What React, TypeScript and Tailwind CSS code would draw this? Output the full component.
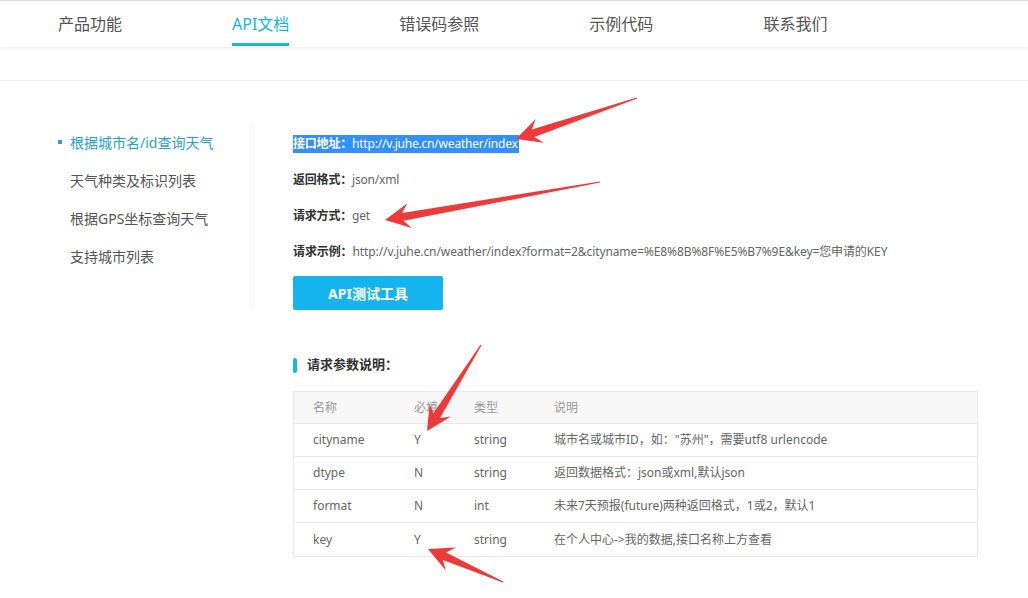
import React from "react";

const navItems = ["产品功能", "API文档", "错误码参照", "示例代码", "联系我们"];

const sideItems = ["根据城市名/id查询天气", "天气种类及标识列表", "根据GPS坐标查询天气", "支持城市列表"];

const params = [
  { name: "cityname", req: "Y", type: "string", desc: "城市名或城市ID，如：\"苏州\"，需要utf8 urlencode" },
  { name: "dtype", req: "N", type: "string", desc: "返回数据格式：json或xml,默认json" },
  { name: "format", req: "N", type: "int", desc: "未来7天预报(future)两种返回格式，1或2，默认1" },
  { name: "key", req: "Y", type: "string", desc: "在个人中心->我的数据,接口名称上方查看" },
];

type Pt = [number, number];

// annotation arrow: tapered tail, barbed head
function arrowPoints(tail: Pt, tip: Pt, headLen = 25, headW = 25, neckW = 8) {
  const dx = tip[0] - tail[0];
  const dy = tip[1] - tail[1];
  const len = Math.hypot(dx, dy);
  const ux = dx / len;
  const uy = dy / len;
  const nx = -uy;
  const ny = ux;
  const wb: Pt = [tip[0] - ux * headLen, tip[1] - uy * headLen];
  const nb: Pt = [tip[0] - ux * headLen * 0.72, tip[1] - uy * headLen * 0.72];
  const pts: Pt[] = [
    [tail[0] + nx * 0.6, tail[1] + ny * 0.6],
    [nb[0] + (nx * neckW) / 2, nb[1] + (ny * neckW) / 2],
    [wb[0] + (nx * headW) / 2, wb[1] + (ny * headW) / 2],
    tip,
    [wb[0] - (nx * headW) / 2, wb[1] - (ny * headW) / 2],
    [nb[0] - (nx * neckW) / 2, nb[1] - (ny * neckW) / 2],
    [tail[0] - nx * 0.6, tail[1] - ny * 0.6],
  ];
  return pts.map((p) => `${p[0].toFixed(1)},${p[1].toFixed(1)}`).join(" ");
}

const arrows: { tail: Pt; tip: Pt }[] = [
  { tail: [637, 98], tip: [516, 139] },
  { tail: [600, 182], tip: [385, 220] },
  { tail: [481, 345], tip: [427, 431] },
  { tail: [503, 582], tip: [428, 549] },
];

export default function App() {
  return (
    <div
      className="relative w-[1028px] h-[598px] overflow-hidden bg-white"
      style={{ fontFamily: '"Noto Sans", "Noto Sans CJK SC", sans-serif' }}
    >
      {/* Top nav */}
      <div className="border-t border-[#dcdcdc] h-[47px] bg-white shadow-[0_2px_3px_rgba(0,0,0,0.06)] relative z-10">
        <nav className="flex items-stretch h-full pl-[58px] gap-[110px]">
          {navItems.map((item, i) => (
            <div
              key={item}
              className={`relative flex items-center text-[16px] ${
                i === 1 ? "text-[#19b4e6]" : "text-[#555]"
              }`}
            >
              <span className="-mt-[1px]">{item}</span>
              {i === 1 && <span className="absolute left-0 right-0 bottom-[1px] h-[3px] bg-[#19b4e6]" />}
            </div>
          ))}
        </nav>
      </div>

      <div className="h-[34px] border-b border-[#eeeeee]" />

      {/* Main */}
      <div className="flex">
        {/* Sidebar */}
        <div className="w-[249px] pl-[58px] pt-[42px]">
          {sideItems.map((s, i) => (
            <div
              key={s}
              className={`flex items-center h-[38px] text-[14px] ${i === 0 ? "text-[#2a9fd8]" : "text-[#555]"}`}
            >
              <span className={`w-[4px] h-[4px] mr-[8px] ${i === 0 ? "bg-[#2a9fd8]" : "bg-transparent"}`} />
              {s}
            </div>
          ))}
        </div>
        <div className="mt-[42px] w-[6px] h-[186px] bg-[#fafafa]" />

        {/* Content */}
        <div className="pl-[38px] pt-[45px] text-[12px]">
          <div className="h-[36px] flex items-center tracking-[-0.2px]">
            <span className="inline-block h-[18px] leading-[18px] bg-[#3390ff] text-white pr-[1px]">
              <span className="font-semibold">接口地址：</span>http://v.juhe.cn/weather/index
            </span>
          </div>
          <div className="h-[36px] flex items-center text-[#666] tracking-[-0.2px]">
            <span className="font-semibold text-[#333]">返回格式：</span>json/xml
          </div>
          <div className="h-[36px] flex items-center text-[#666] tracking-[-0.2px]">
            <span className="font-semibold text-[#333]">请求方式：</span>get
          </div>
          <div className="h-[36px] flex items-center text-[#666] whitespace-nowrap tracking-[-0.1px]">
            <span className="font-semibold text-[#333]">请求示例：</span>
            http://v.juhe.cn/weather/index?format=2&cityname=%E8%8B%8F%E5%B7%9E&key=您申请的KEY
          </div>
          <button className="mt-[6px] w-[150px] h-[34px] rounded-[2px] bg-[#16b4ee] text-white text-[14px] font-bold">
            API测试工具
          </button>

          <div className="mt-[45px] h-[20px] flex items-center">
            <span className="w-[4px] h-[15px] rounded-[2px] bg-[#19b4e6] mr-[10px]" />
            <span className="text-[13px] font-bold text-[#333]">请求参数说明：</span>
          </div>

          <div className="mt-[16px] w-[685px] border border-[#e8e8e8]">
            <div className="flex h-[32px] items-center bg-[#f7f7f7] text-[#999] border-b border-[#e8e8e8]">
              <span className="w-[120px] pl-[19px]">名称</span>
              <span className="w-[60px]">必填</span>
              <span className="w-[80px]">类型</span>
              <span>说明</span>
            </div>
            {params.map((p, i) => (
              <div
                key={p.name}
                className={`flex h-[33px] items-center text-[#666] ${
                  i < params.length - 1 ? "border-b border-[#e8e8e8]" : ""
                }`}
              >
                <span className="w-[120px] pl-[19px]">{p.name}</span>
                <span className="w-[60px]">{p.req}</span>
                <span className="w-[80px]">{p.type}</span>
                <span>{p.desc}</span>
              </div>
            ))}
          </div>
        </div>
      </div>

      {/* Red annotation arrows drawn over the screenshot */}
      <svg className="absolute inset-0 pointer-events-none z-20" width="1028" height="598" viewBox="0 0 1028 598">
        {arrows.map((a, i) => (
          <polygon key={i} points={arrowPoints(a.tail, a.tip)} fill="#f03a3a" />
        ))}
      </svg>
    </div>
  );
}
